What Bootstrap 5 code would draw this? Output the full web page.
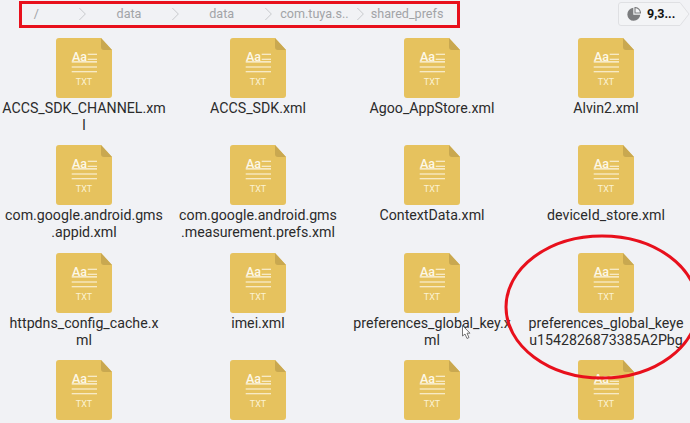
<!DOCTYPE html>
<html lang="en">
<head>
<meta charset="utf-8">
<title>Files</title>
<link rel="stylesheet" href="https://cdn.jsdelivr.net/npm/bootstrap@5.3.0/dist/css/bootstrap.min.css">
<style>
html,body{height:100%;overflow:hidden}
body{background:#f1f2f5;font-family:Roboto,"Liberation Sans",sans-serif;color:#2b2b2b}
.stage{width:690px;height:423px;overflow:hidden}
.crumbbar{height:29px}
.crumbs{height:27px;margin-left:-.7px;font-size:12.6px;color:#a2a4a7;line-height:27px}
.crumb-item{width:74px;text-align:center;white-space:nowrap;flex:none}
.crumb-sep{width:18.7px;flex:none}
.usage{width:70px;height:24px;margin-right:2px;margin-top:2px}
.usage svg{display:block}
.usage-text{font-size:12.5px;font-weight:700;color:#111}
.files{display:grid;grid-template-columns:repeat(4,174px);grid-auto-rows:107.33px;margin-left:-3px;margin-top:9px}
.entry{display:flex;flex-direction:column;align-items:center}
.entry svg{flex:none;display:block}
.fname{width:168px;margin-top:2px;text-align:center;font-size:14.2px;line-height:17px;color:#2b2b2b}
.ring{position:absolute;left:0;top:0;pointer-events:none}
.redbox{position:absolute;left:19px;top:1px;width:441px;height:27px;border:3px solid #e8101c;pointer-events:none}
.cursor{position:absolute;left:462px;top:325px;pointer-events:none}
</style>
</head>
<body>
<svg width="0" height="0" class="d-block position-absolute">
<defs>
<symbol id="txt" viewBox="0 0 56 60">
<path d="M3 0H45L56 12V57a3 3 0 0 1-3 3H3a3 3 0 0 1-3-3V3a3 3 0 0 1 3-3Z" fill="#e6c25e"/>
<path d="M45 0L56 12H48a3 3 0 0 1-3-3Z" fill="#c9a850"/>
<text x="16" y="22.800" font-family="Roboto,sans-serif" font-size="12.500" font-weight="500" fill="#fdf8e8">Aa</text>
<path d="M31.700 16.300H41M31.700 21.300H41M15.700 23.900H41M15.700 29H41M15.700 33.700H41" stroke="#fdf8e8" stroke-width="1.100" fill="none"/>
<text x="28" y="47" font-family="Roboto,sans-serif" font-size="9" fill="#fbf2d4" text-anchor="middle">TXT</text>
</symbol>
</defs>
</svg>
<div class="stage position-relative">
  <div class="crumbbar d-flex justify-content-between">
    <div class="crumbs d-flex align-items-center">
      <span class="crumb-item">/</span>
      <svg class="crumb-sep" width="18" height="16" viewBox="0 0 18 16"><path d="M6 2l6 6-6 6" fill="none" stroke="#c8cacd" stroke-width="1"/></svg>
      <span class="crumb-item">data</span>
      <svg class="crumb-sep" width="18" height="16" viewBox="0 0 18 16"><path d="M6 2l6 6-6 6" fill="none" stroke="#c8cacd" stroke-width="1"/></svg>
      <span class="crumb-item">data</span>
      <svg class="crumb-sep" width="18" height="16" viewBox="0 0 18 16"><path d="M6 2l6 6-6 6" fill="none" stroke="#c8cacd" stroke-width="1"/></svg>
      <span class="crumb-item">com.tuya.s..</span>
      <svg class="crumb-sep" width="18" height="16" viewBox="0 0 18 16"><path d="M6 2l6 6-6 6" fill="none" stroke="#c8cacd" stroke-width="1"/></svg>
      <span class="crumb-item">shared_prefs</span>
    </div>
    <div class="usage position-relative">
      <svg class="position-absolute top-0 start-0" width="72" height="24" viewBox="0 0 72 24"><path d="M3 .5H62L71 12 62 23.500H3a2.500 2.500 0 0 1-2.500-2.500V3A2.500 2.500 0 0 1 3 .5Z" fill="#f3f4f6" stroke="#dfe0e3"/></svg>
      <div class="position-relative d-flex align-items-center h-100" style="gap:6px;padding-left:9px">
        <svg width="14" height="14" viewBox="0 0 14 14"><path d="M6.300.8a6.500 6.500 0 1 0 7 7H6.300Z" fill="#7b7c7e"/><path d="M8 .5a5.700 5.700 0 0 1 5.500 5.500H8Z" fill="none" stroke="#7b7c7e" stroke-width="1.100"/></svg>
        <span class="usage-text">9,3...</span>
      </div>
    </div>
  </div>
  <div class="files">
    <div class="entry"><svg width="56" height="60"><use href="#txt"/></svg><div class="fname">ACCS_SDK_CHANNEL.xm<br>l</div></div>
    <div class="entry"><svg width="56" height="60"><use href="#txt"/></svg><div class="fname">ACCS_SDK.xml</div></div>
    <div class="entry"><svg width="56" height="60"><use href="#txt"/></svg><div class="fname">Agoo_AppStore.xml</div></div>
    <div class="entry"><svg width="56" height="60"><use href="#txt"/></svg><div class="fname">Alvin2.xml</div></div>
    <div class="entry"><svg width="56" height="60"><use href="#txt"/></svg><div class="fname">com.google.android.gms<br>.appid.xml</div></div>
    <div class="entry"><svg width="56" height="60"><use href="#txt"/></svg><div class="fname">com.google.android.gms<br>.measurement.prefs.xml</div></div>
    <div class="entry"><svg width="56" height="60"><use href="#txt"/></svg><div class="fname">ContextData.xml</div></div>
    <div class="entry"><svg width="56" height="60"><use href="#txt"/></svg><div class="fname">deviceId_store.xml</div></div>
    <div class="entry"><svg width="56" height="60"><use href="#txt"/></svg><div class="fname">httpdns_config_cache.x<br>ml</div></div>
    <div class="entry"><svg width="56" height="60"><use href="#txt"/></svg><div class="fname">imei.xml</div></div>
    <div class="entry"><svg width="56" height="60"><use href="#txt"/></svg><div class="fname">preferences_global_key.x<br>ml</div></div>
    <div class="entry"><svg width="56" height="60"><use href="#txt"/></svg><div class="fname">preferences_global_keye<br>u1542826873385A2Pbg</div></div>
    <div class="entry"><svg width="56" height="60"><use href="#txt"/></svg></div>
    <div class="entry"><svg width="56" height="60"><use href="#txt"/></svg></div>
    <div class="entry"><svg width="56" height="60"><use href="#txt"/></svg></div>
    <div class="entry"><svg width="56" height="60"><use href="#txt"/></svg></div>
  </div>
  <div class="redbox"></div>
  <svg class="ring" width="690" height="423" viewBox="0 0 690 423"><ellipse cx="602" cy="307" rx="96" ry="71" fill="none" stroke="#e8101c" stroke-width="3"/></svg>
  <svg class="cursor" width="9" height="14" viewBox="0 0 9 14"><path d="M.5.5V11l2.500-2 2 4.500 2-1-2-4.300H8Z" fill="#fff" stroke="#555" stroke-width=".8"/></svg>
</div>
<script src="https://cdn.jsdelivr.net/npm/bootstrap@5.3.0/dist/js/bootstrap.bundle.min.js"></script>
</body>
</html>
